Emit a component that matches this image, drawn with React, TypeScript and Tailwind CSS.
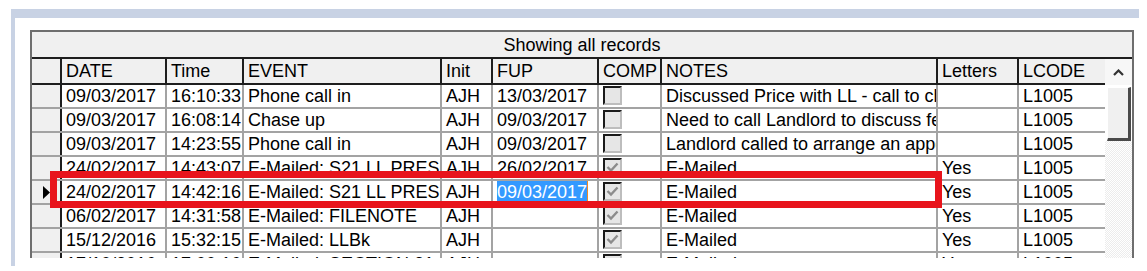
import React from "react";

type Row = {
  date: string;
  time: string;
  event: string;
  init: string;
  fup: string;
  comp: boolean;
  notes: string;
  letters: string;
  lcode: string;
  current?: boolean;
};

const rows: Row[] = [
  { date: "09/03/2017", time: "16:10:33", event: "Phone call in", init: "AJH", fup: "13/03/2017", comp: false, notes: "Discussed Price with LL - call to check", letters: "", lcode: "L1005" },
  { date: "09/03/2017", time: "16:08:14", event: "Chase up", init: "AJH", fup: "09/03/2017", comp: false, notes: "Need to call Landlord to discuss fees", letters: "", lcode: "L1005" },
  { date: "09/03/2017", time: "14:23:55", event: "Phone call in", init: "AJH", fup: "09/03/2017", comp: false, notes: "Landlord called to arrange an appointment", letters: "", lcode: "L1005" },
  { date: "24/02/2017", time: "14:43:07", event: "E-Mailed: S21 LL PRESCRIBED", init: "AJH", fup: "26/02/2017", comp: true, notes: "E-Mailed", letters: "Yes", lcode: "L1005" },
  { date: "24/02/2017", time: "14:42:16", event: "E-Mailed: S21 LL PRESCRIBED", init: "AJH", fup: "09/03/2017", comp: true, notes: "E-Mailed", letters: "Yes", lcode: "L1005", current: true },
  { date: "06/02/2017", time: "14:31:58", event: "E-Mailed: FILENOTE", init: "AJH", fup: "", comp: true, notes: "E-Mailed", letters: "Yes", lcode: "L1005" },
  { date: "15/12/2016", time: "15:32:15", event: "E-Mailed: LLBk", init: "AJH", fup: "", comp: true, notes: "E-Mailed", letters: "Yes", lcode: "L1005" },
  { date: "17/10/2016", time: "17:00:16", event: "E-Mailed: SECTION 21 LL", init: "AJH", fup: "", comp: true, notes: "E-Mailed", letters: "Yes", lcode: "L1005" },
];

// widths include the 2px right border of each column
const W = {
  date: "w-[105px]",
  time: "w-[77px]",
  event: "w-[198px]",
  init: "w-[51px]",
  fup: "w-[106px]",
  comp: "w-[63px]",
  notes: "w-[276px]",
  letters: "w-[81px]",
  lcode: "w-[86px]",
};

const Checkbox = ({ checked }: { checked: boolean }) => (
  <div className="mt-[1px] ml-[4px] w-[19px] h-[19px] bg-[#e6e6e6] border-t-2 border-l-2 border-[#1a1a1a] border-r-2 border-b-2 border-r-[#bdbdbd] border-b-[#bdbdbd] flex items-center justify-center">
    {checked && (
      <svg width="13" height="11" viewBox="0 0 13 11">
        <polyline points="1.5,5 5,8.5 11.5,1.5" fill="none" stroke="#8c8c8c" strokeWidth="2.4" />
      </svg>
    )}
  </div>
);

const HeadCell = ({ w, label, last }: { w: string; label: string; last?: boolean }) => (
  <div className={`${w} shrink-0 h-full pl-[4px] flex items-center bg-[#f0f0f0] ${last ? "" : "border-r-2 border-[#1e1e1e]"}`}>
    {label}
  </div>
);

const Cell = ({ w, children }: { w: string; children?: React.ReactNode }) => (
  <div className={`${w} shrink-0 h-full pl-[4px] flex items-center overflow-hidden whitespace-nowrap border-r-2 border-[#a3a3a3]`}>
    {children}
  </div>
);

export default function App() {
  return (
    <div className="relative w-[1147px] h-[271px] bg-white overflow-hidden font-['Liberation_Sans',Arial,sans-serif] text-[18px] leading-none text-black">
      <div className="ml-[11px] mt-[9px] w-[1128px] h-[257px] border-t-[9px] border-l-4 border-[#c8d2e4] bg-white pl-[15px] pt-[12px]">
        <div className="w-[1104px] h-[228px] overflow-hidden border-t-2 border-l-2 border-r-2 border-[#6e6e6e]">
          {/* title */}
          <div className="h-[27px] bg-[#f0f0f0] border-b-2 border-[#1e1e1e] flex items-center justify-center">
            Showing all records
          </div>

          <div className="flex">
            <div className="w-[1073px]">
              {/* header */}
              <div className="flex h-[26px] border-b-2 border-[#1e1e1e]">
                <div className="w-[30px] shrink-0 bg-[#f0f0f0] border-r-2 border-[#1e1e1e]" />
                <HeadCell w={W.date} label="DATE" />
                <HeadCell w={W.time} label="Time" />
                <HeadCell w={W.event} label="EVENT" />
                <HeadCell w={W.init} label="Init" />
                <HeadCell w={W.fup} label="FUP" />
                <HeadCell w={W.comp} label="COMP" />
                <HeadCell w={W.notes} label="NOTES" />
                <HeadCell w={W.letters} label="Letters" />
                <HeadCell w={W.lcode} label="LCODE" last />
              </div>

              {rows.map((r, i) => (
                <div key={i} className="flex h-[24px] border-b-2 border-[#a3a3a3]">
                  <div className="w-[30px] shrink-0 h-full bg-[#f0f0f0] border-r-2 border-[#1e1e1e] flex items-center justify-end pr-[10px]">
                    {r.current && (
                      <svg width="7" height="13" viewBox="0 0 7 13">
                        <polygon points="0,0 7,6.5 0,13" fill="#000" />
                      </svg>
                    )}
                  </div>
                  <Cell w={W.date}>{r.date}</Cell>
                  <Cell w={W.time}>{r.time}</Cell>
                  <Cell w={W.event}>{r.event}</Cell>
                  <Cell w={W.init}>{r.init}</Cell>
                  <Cell w={W.fup}>
                    {r.current ? (
                      <span className="bg-[#3399ff] text-white py-[2px] border-r border-[#f08a24]">{r.fup}</span>
                    ) : (
                      r.fup
                    )}
                  </Cell>
                  <div className={`${W.comp} shrink-0 h-full border-r-2 border-[#a3a3a3]`}>
                    <Checkbox checked={r.comp} />
                  </div>
                  <Cell w={W.notes}>{r.notes}</Cell>
                  <Cell w={W.letters}>{r.letters}</Cell>
                  <div className={`${W.lcode} shrink-0 h-full pl-[4px] flex items-center`}>{r.lcode}</div>
                </div>
              ))}
            </div>

            {/* vertical scrollbar */}
            <div className="w-[27px] shrink-0 flex flex-col">
              <div className="h-[26px] bg-[#f7f7f7] flex items-center justify-center">
                <svg width="11" height="7" viewBox="0 0 11 7">
                  <polyline points="1,6 5.5,1.5 10,6" fill="none" stroke="#333" strokeWidth="2.2" />
                </svg>
              </div>
              <div className="ml-[2px] mt-[2px] w-[24px] h-[54px] bg-[#f0f0f0] border-t border-l border-white border-r-[3px] border-b-[3px] border-r-[#4a4a4a] border-b-[#4a4a4a]" />
              <div className="flex-1 bg-[repeating-conic-gradient(#ececec_0_25%,#ffffff_0_50%)] bg-[length:2px_2px]" />
            </div>
          </div>
        </div>
      </div>

      {/* annotation box */}
      <div className="absolute left-[50px] top-[171px] w-[892px] h-[37px] border-[7px] border-[#e8141c]" />
    </div>
  );
}
